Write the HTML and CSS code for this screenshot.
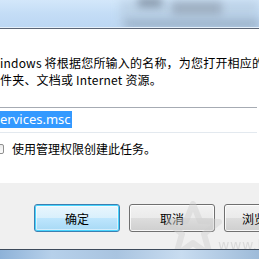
FILE: index.html
```html
<!DOCTYPE html>
<html lang="zh-CN">
<head>
<meta charset="utf-8">
<title>运行</title>
<link rel="stylesheet" href="styles.css">
</head>
<body>
<div class="window">
  <div class="titlebar">
    <div class="blob b1"></div>
    <div class="blob b2"></div>
    <div class="blob b3"></div>
    <div class="blob b4"></div>
  </div>
  <div class="content">
    <p class="desc">indows 将根据您所输入的名称，为您打开相应的<br>件夹、文档或 Internet 资源。</p>
    <div class="field"><span class="sel">ervices.msc</span></div>
    <label class="check"><span class="box"></span><span>使用管理权限创建此任务。</span></label>
  </div>
  <div class="footer">
    <button class="btn default">确定</button>
    <button class="btn">取消</button>
    <button class="btn wide">浏览(B)...</button>
    <div class="watermark">
      <svg class="star" width="56" height="58" viewBox="0 0 56 58"><path d="M27 3 L34 20 L53 21 L38 33 L44 54 L27 42 L10 54 L16 33 L2 21 L20 20 Z" fill="none" stroke="#cfcfcf" stroke-width="6" stroke-linejoin="round"/></svg>
      <span class="wm-url">www.k</span>
    </div>
  </div>
  <div class="taskbar"></div>
</div>
</body>
</html>
```
FILE: styles.css
```css
html, body {
  margin: 0;
  padding: 0;
  background: #ffffff;
}
body {
  font-family: "Noto Sans CJK SC", "Noto Sans", sans-serif;
  font-size: 12px;
  color: #000;
  width: 259px;
  height: 259px;
  overflow: hidden;
}
.window {
  display: flex;
  flex-direction: column;
  height: 259px;
}
.titlebar {
  position: relative;
  height: 27px;
  flex: none;
  background: linear-gradient(180deg, #d3e7fa 0%, #c4ddf6 50%, #bcd7f3 100%);
  border-bottom: 1px solid #e6f0fa;
  box-shadow: 0 1px 0 #5b6575;
  margin-bottom: 1px;
  overflow: hidden;
}
.blob {
  position: absolute;
  filter: blur(4px);
}
.b1 { left: 120px; top: 0; width: 139px; height: 27px; background: #b4c9de; opacity: 0.6; }
.b2 { left: 138px; top: -2px; width: 24px; height: 9px; background: #7a8a9c; opacity: 0.85; }
.b3 { left: 172px; top: 2px; width: 50px; height: 13px; background: #98a8ba; opacity: 0.85; }
.b4 { left: 125px; top: 20px; width: 134px; height: 8px; background: #94abc2; opacity: 0.85; }
.content {
  flex: none;
  height: 154px;
  box-sizing: border-box;
  padding-top: 25px;
  background: #fff;
}
.desc {
  margin: 0;
  line-height: 17px;
  white-space: nowrap;
  letter-spacing: 0.2px;
}
.field {
  margin-top: 19px;
  height: 22px;
  border-top: 1px solid #a6abb3;
  border-bottom: 1px solid #e3e9ef;
  width: 257px;
  padding-top: 2px;
}
.sel {
  display: inline-block;
  background: #3399ff;
  color: #fff;
  font-size: 13px;
  line-height: 17px;
  height: 17px;
  padding-right: 1px;
  font-family: "Noto Sans", sans-serif;
}
.check {
  display: flex;
  align-items: center;
  gap: 8px;
  margin-top: 7px;
  line-height: 17px;
}
.box {
  display: block;
  width: 13px;
  height: 10px;
  margin-left: -9px;
  border: 1px solid #8f8f8f;
  border-radius: 2px;
  background: linear-gradient(180deg, #eaeaea, #fdfdfd);
  box-sizing: border-box;
}
.footer {
  position: relative;
  flex: none;
  height: 67px;
  background: #f0f0f0;
  display: flex;
  align-items: flex-start;
  padding: 21px 0 0 34px;
  box-sizing: border-box;
  gap: 9px;
  border-bottom: 1px solid #3d4a5b;
  overflow: hidden;
}
.btn {
  flex: none;
  width: 86px;
  height: 28px;
  font-family: inherit;
  font-size: 12px;
  color: #000;
  border: 1px solid #707070;
  border-radius: 3px;
  background: linear-gradient(180deg, #f2f2f2 0%, #ebebeb 49%, #dddddd 50%, #cfcfcf 100%);
  box-shadow: inset 0 0 0 1px rgba(255,255,255,0.8);
  padding: 0;
  white-space: nowrap;
}
.btn.default {
  border-color: #3c7fb1;
  background: linear-gradient(180deg, #eaf6fd 0%, #d9f0fc 49%, #bee6fd 50%, #a7d9f5 100%);
  box-shadow: inset 0 0 0 1px #48d4fd, inset 0 0 0 2px rgba(255,255,255,0.5);
}
.watermark {
  position: absolute;
  left: 166px;
  top: 18px;
  width: 100px;
  height: 62px;
  opacity: 0.45;
  pointer-events: none;
}
.star {
  position: absolute;
  left: 0;
  top: 0;
}
.wm-url {
  position: absolute;
  left: 52px;
  top: 36px;
  line-height: 16px;
  font-family: "DejaVu Sans", sans-serif;
  font-size: 14px;
  color: #c0c0c0;
  letter-spacing: 0.5px;
}
.taskbar {
  flex: 1;
  background: linear-gradient(90deg, #8eb2d8 0%, #b6d0ea 20%, #a9c4e0 45%, #c8dcf0 70%, #9ebbd9 100%);
}
```
